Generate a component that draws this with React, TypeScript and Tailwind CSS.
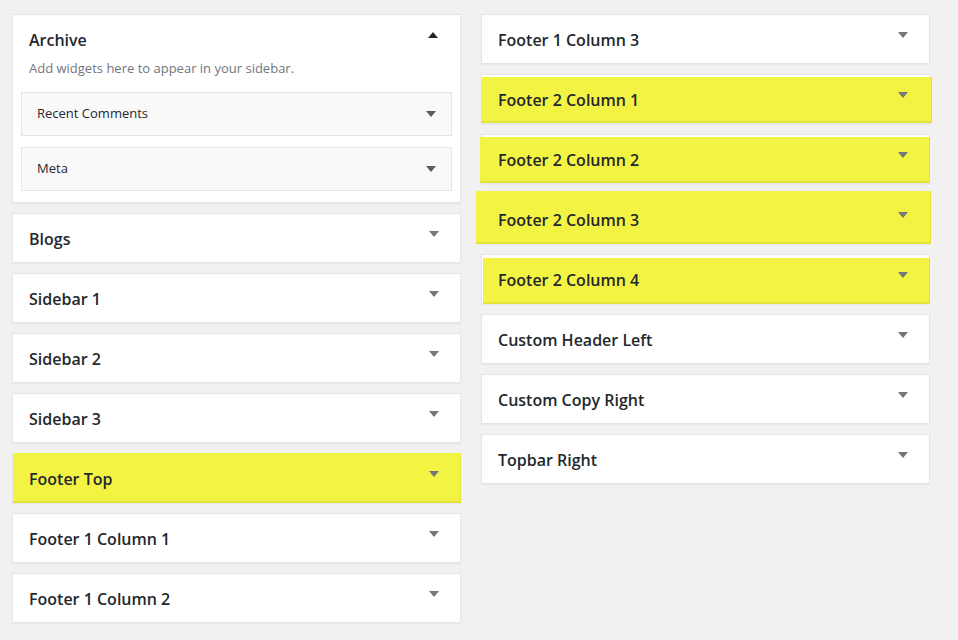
import React from 'react';

type Mark = { t: number; l: number; r: number; b: number };

const font = { fontFamily: '"Open Sans", "Noto Sans", "Liberation Sans", sans-serif' };

function Arrow({ up = false, dark = false }: { up?: boolean; dark?: boolean }) {
    return (
        <svg width="10" height="6" viewBox="0 0 10 6" className="block">
            {up ? (
                <polygon points="0,6 10,6 5,0" fill="#23282d" />
            ) : (
                <polygon points="0,0 10,0 5,6" fill={dark ? '#555d66' : '#72777c'} />
            )}
        </svg>
    );
}

function Sidebar({ title, mark }: { title: string; mark?: Mark }) {
    return (
        <div className="relative h-[50px] bg-white border border-[#e5e5e5] shadow-[0_1px_1px_rgba(0,0,0,0.04)]">
            {/* hand-drawn highlight */}
            {mark && (
                <div
                    className="absolute bg-[#f3f343] border-b-2 border-r border-[#e3e33b]"
                    style={{ top: mark.t, left: mark.l, right: mark.r, bottom: mark.b }}
                />
            )}
            <div className="relative flex h-full items-start justify-between pl-4 pr-[21px]">
                <h3 className="pt-[13px] text-[16px] font-semibold text-[#23282d] leading-[24px]">{title}</h3>
                <div className="pt-[17px]">
                    <Arrow />
                </div>
            </div>
        </div>
    );
}

function InnerWidget({ title }: { title: string }) {
    return (
        <div className="flex h-[44px] items-center justify-between bg-[#f9f9f9] border border-[#e5e5e5] pl-[15px] pr-[15px]">
            <span className="text-[13px] text-[#23282d]">{title}</span>
            <Arrow dark />
        </div>
    );
}

function Archive() {
    return (
        <div className="bg-white border border-[#e5e5e5] shadow-[0_1px_1px_rgba(0,0,0,0.04)] px-2 pb-[11px]">
            <div className="flex items-start justify-between pl-2 pr-[14px]">
                <h3 className="pt-[13px] text-[16px] font-semibold text-[#23282d] leading-[24px]">Archive</h3>
                <div className="pt-[17px]">
                    <Arrow up />
                </div>
            </div>
            <p className="pl-2 pt-[7px] text-[13px] text-[#72777c] leading-[18px]">
                Add widgets here to appear in your sidebar.
            </p>
            <div className="mt-[15px] flex flex-col gap-[11px]">
                <InnerWidget title="Recent Comments" />
                <InnerWidget title="Meta" />
            </div>
        </div>
    );
}

export default function App() {
    return (
        <div className="min-h-[640px] w-[958px] bg-[#f1f1f1] pt-[14px] pl-3" style={font}>
            <div className="flex gap-5">
                <div className="flex w-[449px] flex-col gap-[10px]">
                    <Archive />
                    <Sidebar title="Blogs" />
                    <Sidebar title="Sidebar 1" />
                    <Sidebar title="Sidebar 2" />
                    <Sidebar title="Sidebar 3" />
                    <Sidebar title="Footer Top" mark={{ t: -1, l: 0, r: -1, b: -1 }} />
                    <Sidebar title="Footer 1 Column 1" />
                    <Sidebar title="Footer 1 Column 2" />
                </div>
                <div className="flex w-[449px] flex-col gap-[10px]">
                    <Sidebar title="Footer 1 Column 3" />
                    <Sidebar title="Footer 2 Column 1" mark={{ t: 2, l: -1, r: -3, b: 0 }} />
                    <Sidebar title="Footer 2 Column 2" mark={{ t: 2, l: -2, r: -1, b: 0 }} />
                    <Sidebar title="Footer 2 Column 3" mark={{ t: -4, l: -6, r: -2, b: -1 }} />
                    <Sidebar title="Footer 2 Column 4" mark={{ t: 3, l: 1, r: -1, b: -1 }} />
                    <Sidebar title="Custom Header Left" />
                    <Sidebar title="Custom Copy Right" />
                    <Sidebar title="Topbar Right" />
                </div>
            </div>
        </div>
    );
}
